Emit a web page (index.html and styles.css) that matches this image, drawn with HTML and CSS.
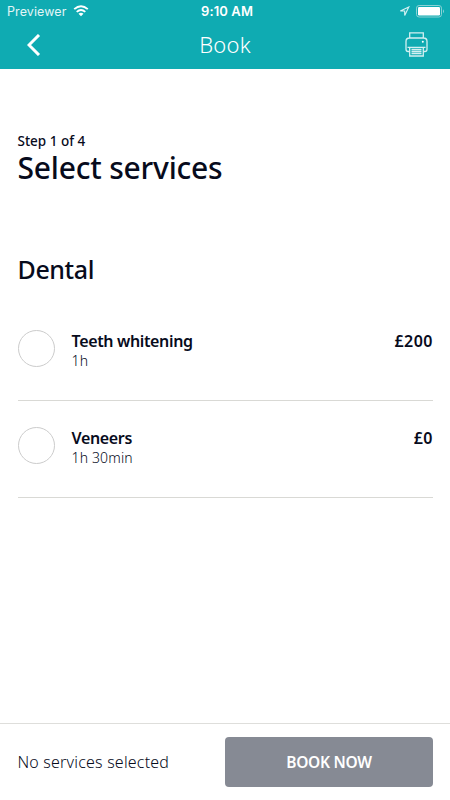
FILE: index.html
```html
<!DOCTYPE html>
<html lang="en">
<head>
<meta charset="utf-8">
<title>Book</title>
<link rel="stylesheet" href="styles.css">
</head>
<body>
<div class="app">
  <header class="top">
    <div class="status">
      <div class="carrier"><span>Previewer</span>
        <svg width="16" height="12" viewBox="0 0 16 12" fill="none" stroke="#fff" stroke-width="1.9"><path d="M1.2 4.1Q8-1.8 14.8 4.1M3.7 6.9Q8 3.2 12.3 6.9"/><path d="M5.5 8.7Q8 6.8 10.5 8.7L8 11.3Z" fill="#fff" stroke="none"/></svg>
      </div>
      <time class="clock">9:10 AM</time>
      <div class="power">
        <svg width="11" height="11" viewBox="0 0 11 11" fill="none" stroke="#d8f2f3" stroke-width="1.1"><path d="M9.8 1L1.3 5H5.7V9.5Z"/></svg>
        <svg width="29" height="13" viewBox="0 0 29 13"><rect x=".5" y=".5" width="25" height="11.5" rx="2.6" fill="none" stroke="#8bd2d5"/><rect x="2" y="2" width="22" height="8.5" rx="1.2" fill="#fff"/><path d="M27 4.3Q29 6.2 27 8.2Z" fill="#8bd2d5"/></svg>
      </div>
    </div>
    <nav class="nav">
      <svg class="back" width="14" height="22" viewBox="0 0 14 22" fill="none" stroke="#fff" stroke-width="3"><path d="M12 1L2 11L12 21"/></svg>
      <h1 class="title">Book</h1>
      <svg class="print" width="23" height="25" viewBox="0 0 23 25" fill="none" stroke="#d3f0f1" stroke-width="1.3"><path d="M4.7 6V.9H18.3V6M4.7 19.5H3.2Q1 19.5 1 17.3V9.5Q1 6 4.5 6H18.5Q22 6 22 9.5V17.3Q22 19.5 19.8 19.5H18.3M2.5 15.3H20.5M4.7 15.3V24H18.3V15.3M6.5 17.5H16.5M6.5 19.5H16.5M6.5 21.5H16.5"/><circle cx="17.8" cy="9.8" r="1" fill="#fff" stroke="none"/></svg>
    </nav>
  </header>
  <main class="content">
    <p class="step">Step 1 of 4</p>
    <h2 class="heading">Select services</h2>
    <h3 class="category">Dental</h3>
    <ul class="services">
      <li class="service"><span class="radio"></span><div class="info"><p class="name">Teeth whitening</p><p class="length">1h</p></div><span class="price">£200</span></li>
      <li class="service"><span class="radio"></span><div class="info"><p class="name">Veneers</p><p class="length">1h 30min</p></div><span class="price">£0</span></li>
    </ul>
  </main>
  <footer class="bottom">
    <span class="summary">No services selected</span>
    <button class="book" type="button">BOOK NOW</button>
  </footer>
</div>
</body>
</html>
```
FILE: styles.css
```css
* { box-sizing: border-box; margin: 0; padding: 0; }
body { background: #fff; color: #070b1c; font-family: "Noto Sans", "Open Sans", sans-serif; }
.app { width: 450px; height: 800px; display: flex; flex-direction: column; overflow: hidden; }
svg { display: block; flex: none; }
.top { height: 69px; background: #0fabb2; color: #fff; flex: none; }
.status { height: 22px; display: grid; grid-template-columns: 1fr auto 1fr; align-items: center; padding: 0 5px 0 7px; font-family: Inter, sans-serif; font-size: 13px; }
.carrier { display: flex; align-items: center; gap: 6px; color: #e2f5f6; font-size: 12.5px; letter-spacing: .1px; }
.clock { font-weight: 600; letter-spacing: .1px; margin-left: 2px; }
.power { display: flex; justify-content: flex-end; align-items: center; gap: 6px; }
.nav { height: 47px; display: grid; grid-template-columns: 1fr auto 1fr; align-items: center; padding: 0 22px 2px 27px; }
.title { font-weight: 300; font-size: 22px; line-height: 30px; letter-spacing: .2px; margin: -2px 5px 0 0; }
.print { justify-self: end; }
.content { flex: 1; padding: 62px 17.5px 0 17.5px; }
.step { font-size: 13.5px; line-height: 20px; font-weight: 500; }
.heading { font-size: 30px; line-height: 34px; font-weight: 500; letter-spacing: -.2px; }
.category { font-size: 25px; line-height: 34px; font-weight: 500; letter-spacing: -.4px; margin-top: 67px; }
.services { list-style: none; margin-top: 18px; }
.service { display: flex; height: 97px; padding-top: 26px; border-bottom: 1px solid #d9d9d5; }
.radio { width: 37px; height: 37px; border: 1px solid #ccc; border-radius: 50%; flex: none; margin: 0 17px 0 0; }
.info { flex: 1; }
.name, .price { font-size: 16px; line-height: 22px; font-weight: 600; }
.name { letter-spacing: -.35px; }
.price { letter-spacing: .5px; margin-right: -.5px; }
.length { font-size: 14px; line-height: 17px; font-weight: 300; letter-spacing: .15px; }
.bottom { height: 77px; border-top: 1px solid #dededb; display: flex; align-items: center; justify-content: space-between; padding: 0 17px 0 17.5px; flex: none; }
.summary { font-size: 16px; font-weight: 300; letter-spacing: .2px; }
.book { width: 208px; height: 50px; border: 0; border-radius: 4px; background: #868a94; color: #fff; font: 600 15.5px "Noto Sans", sans-serif; letter-spacing: -.3px; padding-bottom: 1px; }
```
